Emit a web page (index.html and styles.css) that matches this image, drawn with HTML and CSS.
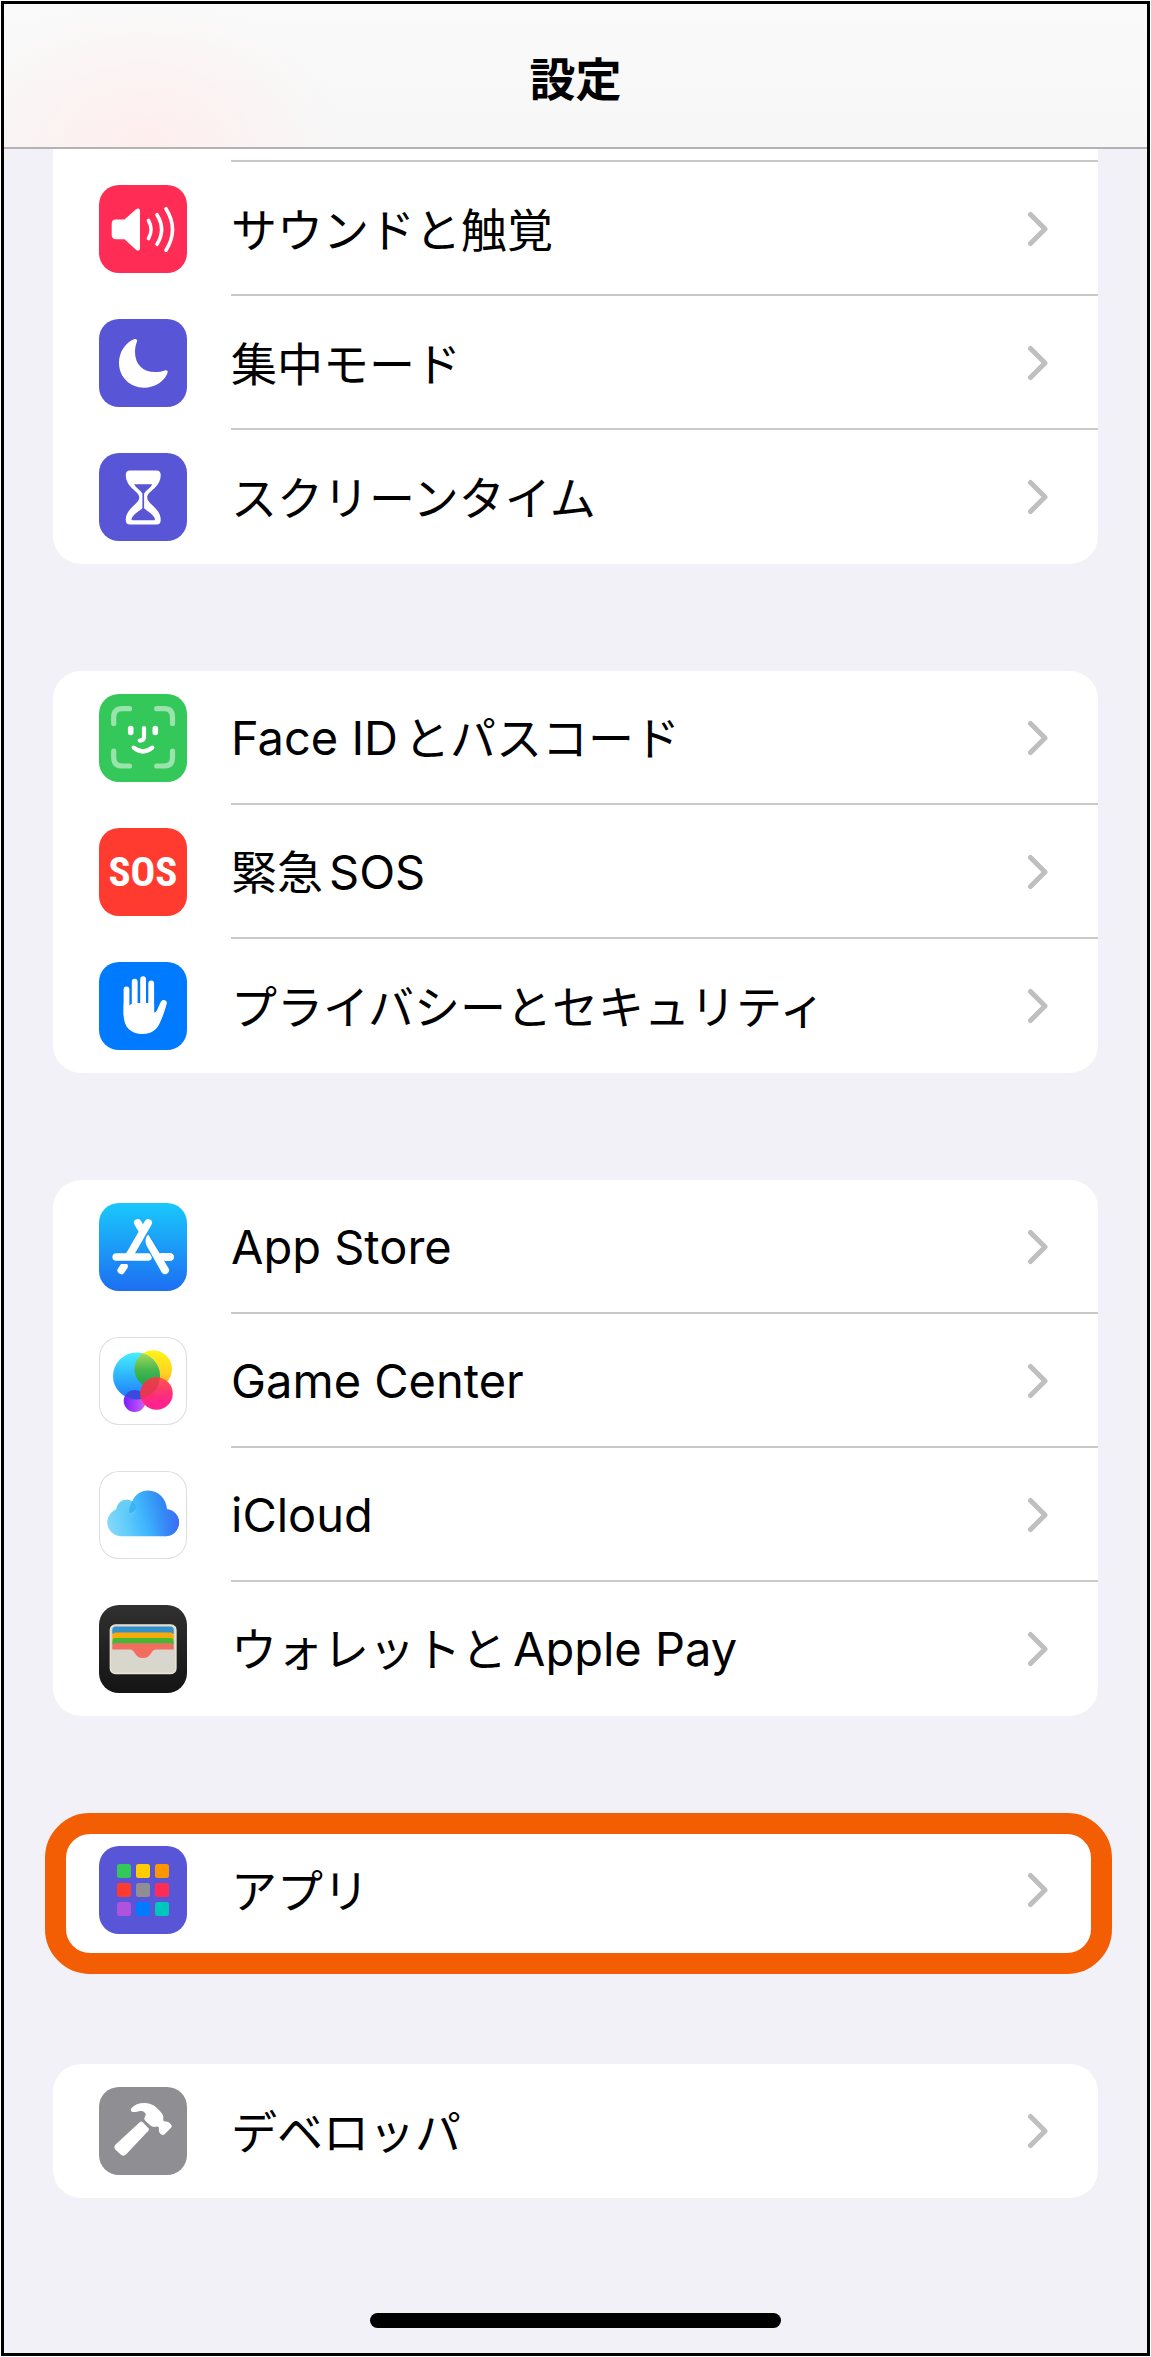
FILE: index.html
```html
<!DOCTYPE html>
<html lang="ja">

<head>
  <meta charset="UTF-8">
  <meta name="viewport" content="width=device-width, initial-scale=1">
  <title>設定</title>
  <link rel="stylesheet" href="styles.css">
</head>

<body>
  <!-- shared chevron -->
  <svg class="defs" width="0" height="0" aria-hidden="true">
    <symbol id="chevron" viewBox="0 0 22 36">
      <path d="M3.5 3.5 L18 18 L3.5 32.5" fill="none" stroke="#bfbfbf" stroke-width="5" stroke-linecap="round" stroke-linejoin="round" />
    </symbol>
  </svg>

  <div class="screen">
    <header class="header">
      <h1 class="header-title">設定</h1>
    </header>

    <main class="content">
      <ul class="card card-cut">
        <li>
          <a class="row" href="#sound">
            <svg class="icon pink" viewBox="0 0 88 88" aria-hidden="true">
              <path d="M17 34.500h8.500L37 24.300c2-1.800 4-.8 4 1.700v37c0 2.500-2 3.500-4 1.700L25.500 54.200H17c-3 0-4.300-1.500-4.300-4.200V38.800c0-2.800 1.300-4.300 4.300-4.300z" fill="#fff" />
              <g fill="none" stroke="#fff" stroke-width="3.600" stroke-linecap="round">
                <path d="M49.500 35.500q5.200 9 0 18" />
                <path d="M58 29.700q9.200 14.800 0 29.600" />
                <path d="M67 23.700q13 20.800 0 41.600" />
              </g>
            </svg>
            <span class="label">サウンドと触覚</span>
            <svg class="chevron" aria-hidden="true"><use href="#chevron" /></svg>
          </a>
        </li>
        <li>
          <a class="row" href="#focus">
            <svg class="icon indigo" viewBox="0 0 88 88" aria-hidden="true">
              <path d="M34.500 20.500C26 24 20 33.500 20 44c0 14 11 24.700 25 24.700 11 0 20.500-6.500 23.500-14.700.7-2-.5-3.200-2.700-2.400-3.300 1.200-6 1.500-9.300 1.500C43.500 53.100 36 45 36 33c0-4 .7-7 2-10.500.6-2-1-3-3.500-2z" fill="#fff" />
            </svg>
            <span class="label">集中モード</span>
            <svg class="chevron" aria-hidden="true"><use href="#chevron" /></svg>
          </a>
        </li>
        <li>
          <a class="row" href="#screen-time">
            <svg class="icon indigo" viewBox="0 0 88 88" aria-hidden="true">
              <path d="M31 17.500h26.500c3 0 4.200 1.500 4.200 4.500 0 13-13.500 16-13.500 22.500S61.700 55 61.700 67c0 3-1.200 4.500-4.200 4.500H31c-3 0-4.200-1.500-4.200-4.500 0-12 13.500-16 13.500-22.500S26.800 35 26.800 22c0-3 1.200-4.500 4.200-4.500z" fill="#fff" />
              <path d="M35 31.300h18.500c-2.500 4-6.500 6-8.400 9.200v14.800c3 3 8.900 5.200 10.900 10.700q.2 1.200-1 1.200H33.500q-1.200 0-1-1.200c2-5.500 7.900-7.700 10.900-10.700V40.500C41.500 37.300 37.500 35.300 35 31.300z" fill="#5856d6" />
            </svg>
            <span class="label">スクリーンタイム</span>
            <svg class="chevron" aria-hidden="true"><use href="#chevron" /></svg>
          </a>
        </li>
      </ul>

      <ul class="card">
        <li>
          <a class="row" href="#face-id">
            <svg class="icon green" viewBox="0 0 88 88" aria-hidden="true">
              <g fill="none" stroke="#fff" stroke-width="5.200" stroke-linecap="round">
                <path opacity=".5" d="M14.700 29.500V23q0-8.300 8.300-8.300h7.500M57.700 14.700h7.500q8.300 0 8.300 8.300v6.500M14.700 57v6.700q0 8.300 8.300 8.300h7.500M57.700 72h7.500q8.300 0 8.300-8.300V57" />
                <path d="M31.700 34.500v4M56.300 34.500v4" stroke-width="5.600" />
                <path d="M45 34v9q0 3.600-4.300 3.600" stroke-width="4.200" />
                <path d="M34.700 53.700q9.300 7.600 18.600 0" stroke-width="4.200" />
              </g>
            </svg>
            <span class="label"><span class="latin latin-first">Face ID</span>とパスコード</span>
            <svg class="chevron" aria-hidden="true"><use href="#chevron" /></svg>
          </a>
        </li>
        <li>
          <a class="row" href="#sos">
            <span class="icon icon-sos red" aria-hidden="true">SOS</span>
            <span class="label">緊急<span class="latin latin-last">SOS</span></span>
            <svg class="chevron" aria-hidden="true"><use href="#chevron" /></svg>
          </a>
        </li>
        <li>
          <a class="row" href="#privacy">
            <svg class="icon blue" viewBox="0 0 88 88" aria-hidden="true">
              <path d="M27.500 27.500V52M35.700 19.700V48M44.100 17.200V48M52.200 21.500V52" stroke="#fff" stroke-width="5.800" stroke-linecap="round" />
              <path d="M24.600 42.500l5.800.8 2.400-1.500 6-.8h10.500l5.800 1v8.500c2.200-.2 3-2.300 4-4.800l2.700-6c1.800-3.200 6.800-1.700 6 1.800-1.700 6-4 13.500-7 19.500-3.500 7.500-9 11-17 11-13.200 0-19.200-8-19.200-19.500z" fill="#fff" />
            </svg>
            <span class="label">プライバシーとセキュリティ</span>
            <svg class="chevron" aria-hidden="true"><use href="#chevron" /></svg>
          </a>
        </li>
      </ul>

      <ul class="card">
        <li>
          <a class="row" href="#app-store">
            <svg class="icon app-store" viewBox="0 0 88 88" aria-hidden="true">
              <g fill="none" stroke="#fff" stroke-width="7.600" stroke-linecap="round">
                <path d="M38.800 19.900l5 8.500" />
                <path d="M49.200 19.900L30 53" />
                <path d="M17.200 54H49" />
                <path d="M62 54h9" />
                <path d="M25 63.300l-2.700 4.100" />
              </g>
              <path d="M18 59.500h15" stroke="#1b84f6" stroke-width="3" />
              <path d="M49.300 31.500c-3.500 3-3.700 8-1 12.500L62.500 69c1.500 2.500 4 2.600 5.700 1.400 2-1.300 2.300-3.400 1.200-5.500z" fill="#fff" stroke="#1592f8" stroke-width="2" paint-order="stroke" />
              <path d="M61 54h10" stroke="#fff" stroke-width="7.600" stroke-linecap="round" />
            </svg>
            <span class="label"><span class="latin">App Store</span></span>
            <svg class="chevron" aria-hidden="true"><use href="#chevron" /></svg>
          </a>
        </li>
        <li>
          <a class="row" href="#game-center">
            <svg class="icon outlined" viewBox="0 0 88 88" aria-hidden="true">
              <defs>
                <linearGradient id="gcBlue" x1="0" y1="0" x2="0" y2="1">
                  <stop offset="0" stop-color="#46eeff" />
                  <stop offset=".5" stop-color="#2fb4fb" />
                  <stop offset="1" stop-color="#1a78ff" />
                </linearGradient>
                <linearGradient id="gcYellow" x1="0" y1="0" x2="0" y2="1">
                  <stop offset="0" stop-color="#fff31a" />
                  <stop offset=".6" stop-color="#ffd31f" />
                  <stop offset="1" stop-color="#ff9f2a" />
                </linearGradient>
                <linearGradient id="gcGreen" x1="0" y1="0" x2="0" y2="1">
                  <stop offset="0" stop-color="#b4e05c" />
                  <stop offset=".5" stop-color="#4cb84f" />
                  <stop offset="1" stop-color="#10a44c" />
                </linearGradient>
                <linearGradient id="gcPurple">
                  <stop offset="0" stop-color="#7d1cff" />
                  <stop offset="1" stop-color="#d264f5" />
                </linearGradient>
                <linearGradient id="gcRed" x1="0" y1="0" x2="0" y2="1">
                  <stop offset="0" stop-color="#ff5a48" />
                  <stop offset=".6" stop-color="#ff2a80" />
                  <stop offset="1" stop-color="#ff1f94" />
                </linearGradient>
                <clipPath id="gcBlueClip"><circle cx="37.500" cy="39" r="23.500" /></clipPath>
                <clipPath id="gcRedClip"><circle cx="57.500" cy="56.500" r="16.300" /></clipPath>
              </defs>
              <circle cx="35.700" cy="64" r="11" fill="url(#gcPurple)" />
              <circle cx="54.200" cy="32" r="18.800" fill="url(#gcYellow)" />
              <circle cx="37.500" cy="39" r="23.500" fill="url(#gcBlue)" />
              <circle cx="35.700" cy="64" r="11" fill="#3c49de" clip-path="url(#gcBlueClip)" />
              <circle cx="54.200" cy="32" r="18.800" fill="url(#gcGreen)" clip-path="url(#gcBlueClip)" />
              <circle cx="57.500" cy="56.500" r="16.300" fill="url(#gcRed)" />
              <g clip-path="url(#gcRedClip)">
                <circle cx="37.500" cy="39" r="23.500" fill="#dc3a45" opacity=".75" />
              </g>
            </svg>
            <span class="label"><span class="latin">Game Center</span></span>
            <svg class="chevron" aria-hidden="true"><use href="#chevron" /></svg>
          </a>
        </li>
        <li>
          <a class="row" href="#icloud">
            <svg class="icon outlined" viewBox="0 0 88 88" aria-hidden="true">
              <defs>
                <linearGradient id="cloud" gradientUnits="userSpaceOnUse" x1="8" y1="56" x2="80" y2="36">
                  <stop offset="0" stop-color="#8ad9f8" />
                  <stop offset=".25" stop-color="#62cdfb" />
                  <stop offset=".5" stop-color="#3fb5fd" />
                  <stop offset=".8" stop-color="#3188f2" />
                  <stop offset="1" stop-color="#3478f6" />
                </linearGradient>
                <linearGradient id="cloudRight">
                  <stop offset="0" stop-color="#3b9cfa" stop-opacity="0" />
                  <stop offset="1" stop-color="#3a6bf7" />
                </linearGradient>
                <linearGradient id="cloudPuff" x1="0" y1="0" x2="0" y2="1">
                  <stop offset="0" stop-color="#6ccff3" />
                  <stop offset="1" stop-color="#6ccff3" stop-opacity="0" />
                </linearGradient>
              </defs>
              <path d="M22.500 65.300c-8 0-14.200-6.200-14.200-14 0-5.800 3.800-10.800 9-13 1-6 5-9.600 10.300-9.600 2 0 4 .6 5.500 1.700 2.800-6.500 8.800-10.900 16-10.900 10.300 0 18.400 8.300 18.900 18.700 6.700.6 12 6.300 12 13.300 0 7.500-6 13.800-13.500 13.800z" fill="url(#cloud)" />
              <circle cx="66.500" cy="51.600" r="13.600" fill="url(#cloudRight)" />
              <circle cx="27.400" cy="38.500" r="9.700" fill="url(#cloudPuff)" />
              <path d="M33.200 30.600c-2.400 3.600-3.200 7.400-3 11.500 4-1 6.500-2.600 6.800-4.600.2-2.700-1.200-5.200-3.800-6.900z" fill="#1ea2ee" opacity=".55" />
            </svg>
            <span class="label"><span class="latin">iCloud</span></span>
            <svg class="chevron" aria-hidden="true"><use href="#chevron" /></svg>
          </a>
        </li>
        <li>
          <a class="row" href="#wallet">
            <svg class="icon wallet" viewBox="0 0 88 88" aria-hidden="true">
              <rect x="11.300" y="19.900" width="65.700" height="48.600" rx="5" fill="#d9d6cd" stroke="#ece6d6" stroke-width="1.300" />
              <path d="M13.300 29v-4q0-3.500 3.500-3.500h54.400q3.500 0 3.500 3.500v4z" fill="#3390c8" />
              <path d="M13.300 35v-4q0-3.500 3.500-3.500h54.400q3.500 0 3.500 3.500v4z" fill="#fba906" />
              <path d="M13.300 40v-3.500q0-3.500 3.500-3.500h54.400q3.500 0 3.500 3.500V40z" fill="#46b637" />
              <path d="M13.300 44.500v-3q0-3.200 3.500-3.200h54.400q3.500 0 3.500 3.200v3H58c-3.500 0-4.500 1.500-6 4-2 3.200-4.200 4.400-8 4.400s-6-1.200-8-4.400c-1.500-2.500-2.500-4-6-4z" fill="#f26d5f" />
            </svg>
            <span class="label">ウォレットと<span class="latin latin-last">Apple Pay</span></span>
            <svg class="chevron" aria-hidden="true"><use href="#chevron" /></svg>
          </a>
        </li>
      </ul>

      <ul class="card card-marked">
        <li>
          <a class="row" href="#apps">
            <svg class="icon indigo" viewBox="0 0 88 88" aria-hidden="true">
              <rect x="18" y="18" width="14" height="14" rx="2.500" fill="#34c759" />
              <rect x="37" y="18" width="14" height="14" rx="2.500" fill="#ffcc00" />
              <rect x="56" y="18" width="14" height="14" rx="2.500" fill="#ff9500" />
              <rect x="18" y="37" width="14" height="14" rx="2.500" fill="#ff3b30" />
              <rect x="37" y="37" width="14" height="14" rx="2.500" fill="#8e8e93" />
              <rect x="56" y="37" width="14" height="14" rx="2.500" fill="#ff2d55" />
              <rect x="18" y="56" width="14" height="14" rx="2.500" fill="#af52de" />
              <rect x="37" y="56" width="14" height="14" rx="2.500" fill="#007aff" />
              <rect x="56" y="56" width="14" height="14" rx="2.500" fill="#00c7be" />
            </svg>
            <span class="label">アプリ</span>
            <svg class="chevron" aria-hidden="true"><use href="#chevron" /></svg>
          </a>
        </li>
      </ul>

      <ul class="card">
        <li>
          <a class="row" href="#developer">
            <svg class="icon gray" viewBox="0 0 88 88" aria-hidden="true">
              <g fill="#fff">
                <path d="M43.500 35l6 6.200q1 1.200-.1 2.500L27 67.500q-2.500 2.200-5 .2l-5.700-5.200q-2-2.500.3-5L41 35q1.300-1 2.500 0z" />
                <path d="M32.200 21.500c3.500-4 8.500-5.800 14-5.500 6.500.3 10.500 3.300 14.600 8 2.800 3 3.900 4.600 3.500 7.200-.3 2 .2 3.300 1.700 3.400 2.200-.3 3.800.6 5.300 2.200 1.800 1.700 2 2.700.5 4.200l-6 6c-1.500 1.500-3 1.300-4.300-.2-1.300-1.500-2-3-1.600-4.800.3-1.800-.6-2.900-2.200-2.500-2.500.8-4.700.3-6.500-1.300l-4.700-4.300c-1.700-1.600-1.500-3.400.2-5.700.4-2-2.200-4.500-5.200-4.200-3 .4-5.200 1.500-8 .9-1.700-.5-2.200-2.200-1.300-3.400z" />
              </g>
            </svg>
            <span class="label">デベロッパ</span>
            <svg class="chevron" aria-hidden="true"><use href="#chevron" /></svg>
          </a>
        </li>
      </ul>
    </main>

    <div class="home-bar"></div>
  </div>
</body>

</html>
```
FILE: styles.css
```css
* {
  box-sizing: border-box;
}

body {
  margin: 0;
  padding: 1px;
  font-family: "Noto Sans CJK JP", sans-serif;
  color: #000;
  background-color: white;
}

.defs {
  display: none;
}

.screen {
  border: 3px solid black;
  padding-bottom: 25px;
  background-color: #f2f1f7;
}

.header {
  display: flex;
  align-items: center;
  justify-content: center;
  height: 145px;
  border-bottom: 2px solid #b3b3b5;
  background: radial-gradient(ellipse 200px 150px at 140px 145px, #ffeeee, transparent), linear-gradient(#fafafa, #f7f7f7);
}

.header-title {
  margin: 0;
  font-size: 46px;
  line-height: 60px;
  font-weight: bold;
}

.content {
  padding: 0 49px;
  display: flex;
  flex-direction: column;
  gap: 107px;
}

.card {
  list-style: none;
  margin: 0;
  padding: 0;
  border-radius: 28px;
  background-color: white;
}

/* scrolled under the header, so the top is cut off */
.card-cut {
  border-radius: 0 0 28px 28px;
}

.card-cut::before {
  content: "";
  display: block;
  height: 11px;
  margin-left: 178px;
  border-bottom: 2px solid #c9c9cb;
}

.row {
  display: flex;
  align-items: center;
  gap: 44px;
  height: 134px;
  padding-left: 46px;
  color: inherit;
  text-decoration: none;
  position: relative;
}

li:not(:last-child) .row::after {
  content: "";
  position: absolute;
  left: 178px;
  right: 0;
  bottom: 0;
  height: 2px;
  background-color: #c9c9cb;
}

.label {
  flex: 1;
  padding-bottom: 4px;
  font-size: 46px;
  line-height: 60px;
  white-space: nowrap;
}

.latin {
  font-family: Inter, sans-serif;
  font-size: 47px;
}

.latin-first {
  margin-right: 6px;
}

.latin-last {
  margin-left: 6px;
}

.chevron {
  width: 22px;
  height: 36px;
  margin-right: 49px;
}

.icon {
  flex: none;
  width: 88px;
  height: 88px;
  border-radius: 20px;
}

.icon-sos {
  display: flex;
  align-items: center;
  justify-content: center;
  font-family: "Liberation Sans Narrow", "Roboto Condensed", "DejaVu Sans Condensed", sans-serif;
  font-size: 41px;
  font-weight: bold;
  color: white;
}

.pink {
  background-color: #ff2d55;
}

.indigo {
  background-color: #5856d6;
}

.green {
  background-color: #34c759;
}

.red {
  background-color: #ff3b30;
}

.blue {
  background-color: #007aff;
}

.gray {
  background-color: #8e8e93;
}

.app-store {
  background: linear-gradient(#1ac8fc, #1d6ef2);
}

.wallet {
  background: linear-gradient(#303030, #141414);
}

.outlined {
  background-color: white;
  box-shadow: inset 0 0 0 1px #dedede;
}

.card-marked {
  position: relative;
}

/* orange marker laid over the card */
.card-marked::after {
  content: "";
  position: absolute;
  top: -10px;
  right: -14px;
  bottom: -17px;
  left: -8px;
  box-sizing: border-box;
  border: 21px solid #f35e05;
  border-radius: 45px;
  pointer-events: none;
}

.home-bar {
  width: 36%;
  height: 15px;
  margin: 115px auto 0;
  border-radius: 8px;
  background-color: black;
}
```
